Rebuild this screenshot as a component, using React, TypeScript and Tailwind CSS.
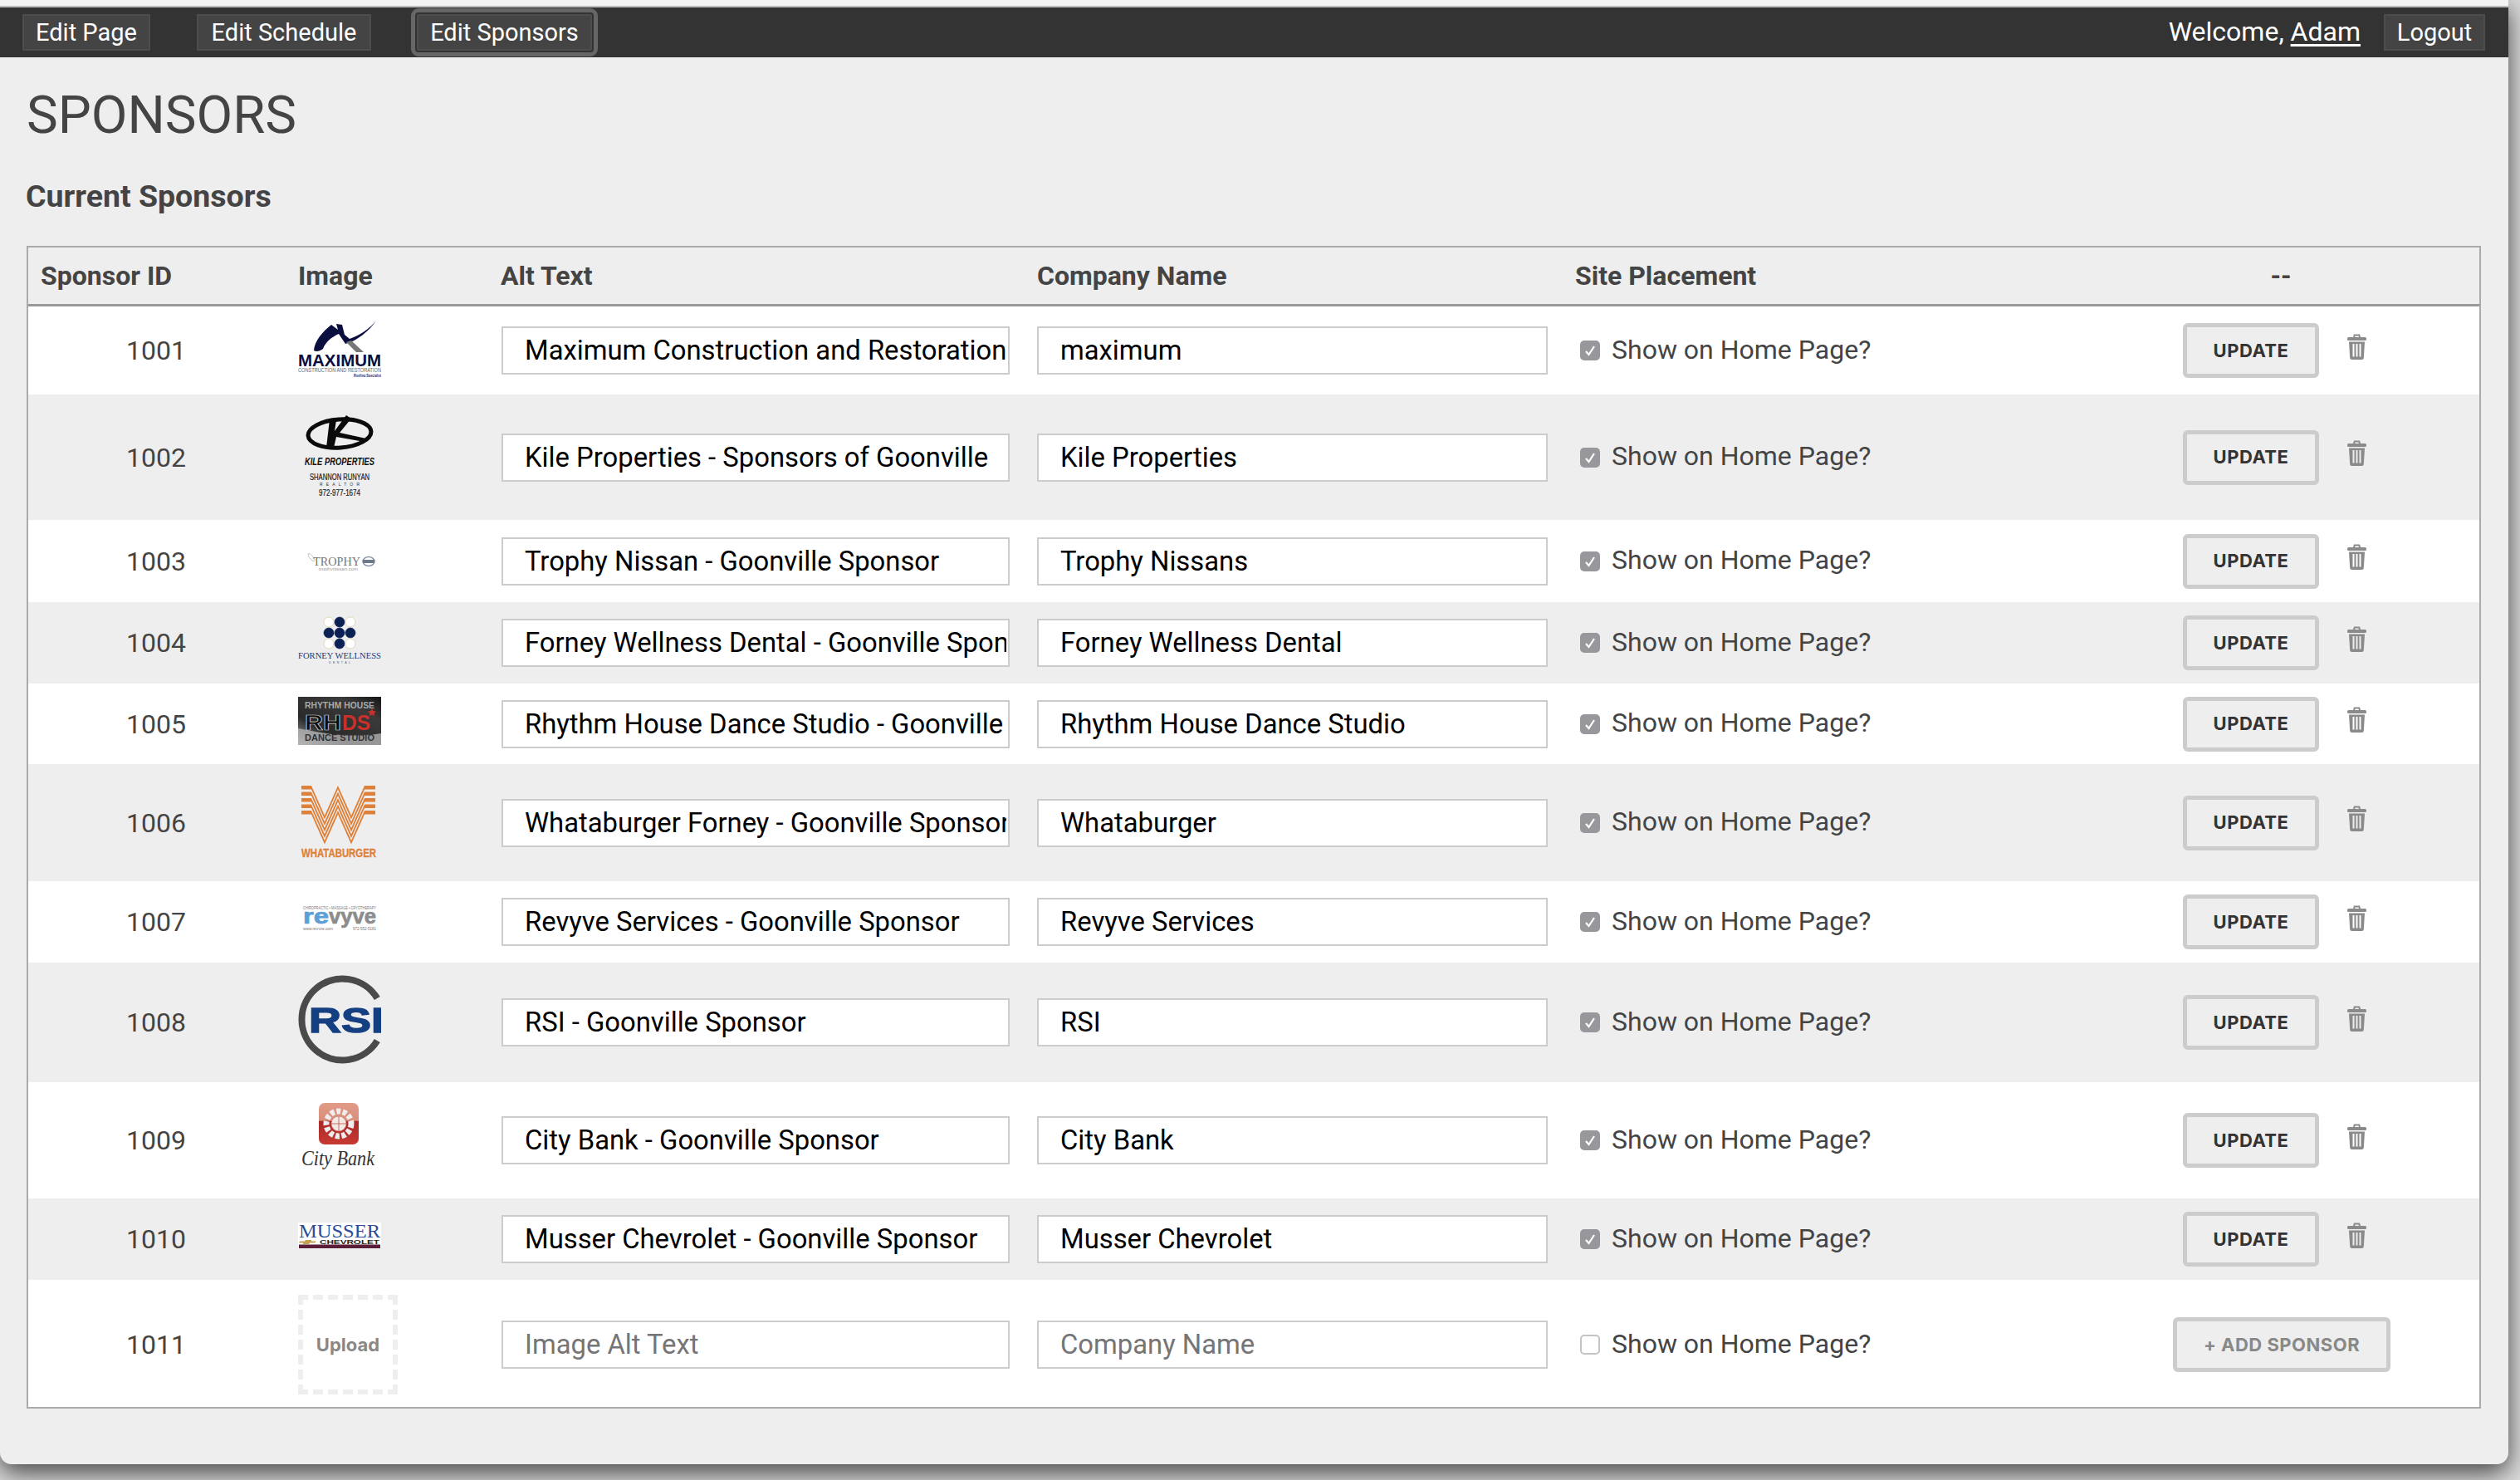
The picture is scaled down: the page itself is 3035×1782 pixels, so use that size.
import React from "react";

const serif = "'Liberation Serif', serif";
const sans = "'Liberation Sans', sans-serif";

function MaximumLogo() {
  return (
    <svg width="100" height="68" viewBox="0 0 100 68">
      <path d="M19 36 C20 24 30 13 40 5 L48 11 L46 4 L53 5 L56 17 L62 22 C76 17 87 9 94 0 C86 12 72 24 57 28 L49 16 C40 20 33 26 30 34 C26 37 22 38 19 36Z" fill="#0a0f3f" />
      <path d="M58 26 L64 24 L79 38 L70 38Z" fill="#777" />
      <text x="0" y="55" fontFamily={sans} fontWeight="700" fontSize="21" fill="#0a0f3f" textLength="100" lengthAdjust="spacingAndGlyphs">MAXIMUM</text>
      <text x="0" y="62" fontFamily={sans} fontSize="6.5" fill="#666" textLength="100" lengthAdjust="spacingAndGlyphs">CONSTRUCTION AND RESTORATION</text>
      <text x="67" y="67.5" fontFamily={sans} fontWeight="700" fontSize="5" fill="#1b2a78" textLength="33" lengthAdjust="spacingAndGlyphs">Roofing Specialist</text>
    </svg>
  );
}

function KileLogo() {
  return (
    <svg width="100" height="100" viewBox="0 0 100 100">
      <ellipse cx="50" cy="23" rx="38" ry="17" fill="none" stroke="#0a0a0a" strokeWidth="5" transform="rotate(-4 50 23)" />
      <path d="M34 40 L38 6 L46 7 L44 20 L58 1 L64 5 L50 22 L82 29 L80 33 L46 27 L43 40Z" fill="#0a0a0a" />
      <text x="8" y="61" fontFamily={sans} fontStyle="italic" fontWeight="700" fontSize="12" fill="#111" textLength="84" lengthAdjust="spacingAndGlyphs">KILE PROPERTIES</text>
      <text x="14" y="79" fontFamily={sans} fontSize="10.500" fill="#222" stroke="#222" strokeWidth="0.2" textLength="72" lengthAdjust="spacingAndGlyphs">SHANNON RUNYAN</text>
      <text x="26" y="86" fontFamily={sans} fontSize="5" fill="#333" textLength="48">REALTOR</text>
      <text x="25" y="98" fontFamily={sans} fontSize="10.500" fill="#222" stroke="#222" strokeWidth="0.2" textLength="50" lengthAdjust="spacingAndGlyphs">972-977-1674</text>
    </svg>
  );
}

function TrophyLogo() {
  return (
    <svg width="100" height="23" viewBox="0 0 100 23">
      <path d="M12 3 C14 1 16 4 19 8 C21 10 20 13 17 11 C15 9 12 7 12 3Z" fill="none" stroke="#999" strokeWidth="0.6" />
      <text x="18" y="17" fontFamily={serif} fontSize="15" fill="#777" textLength="57" lengthAdjust="spacingAndGlyphs">TROPHY</text>
      <text x="25" y="22.5" fontFamily={sans} fontSize="4.5" fill="#999" textLength="47" lengthAdjust="spacingAndGlyphs">trophynissan.com</text>
      <ellipse cx="85" cy="12" rx="7" ry="5.5" fill="none" stroke="#8b95a5" strokeWidth="1.5" />
      <rect x="78" y="10" width="14" height="4" fill="#6d7888" />
    </svg>
  );
}

function ForneyLogo() {
  const navy = "#0b2053";
  return (
    <svg width="100" height="58" viewBox="0 0 100 58">
      {[7, 20, 33].map((cy, row) =>
        [37, 50, 63].map((cx, col) => {
          const corner = (row === 0 || row === 2) && col !== 1;
          return <circle key={`${row}-${col}`} cx={cx} cy={cy} r="6" fill={corner ? "#fff" : navy} stroke={corner ? "#dcc9a0" : navy} strokeWidth="0.7" />;
        })
      )}
      <text x="0" y="51" fontFamily={serif} fontSize="10" fill="#2a3a70" textLength="100" lengthAdjust="spacingAndGlyphs">FORNEY WELLNESS</text>
      <text x="37" y="56.5" fontFamily={sans} fontSize="3.6" fill="#556" textLength="26">DENTAL</text>
    </svg>
  );
}

function RhythmLogo() {
  return (
    <svg width="100" height="58" viewBox="0 0 100 58">
      <defs>
        <linearGradient id="rhds" x1="0" y1="1" x2="1" y2="0">
          <stop offset="0" stopColor="#a8a8a8" />
          <stop offset="0.3" stopColor="#2a2a2a" />
          <stop offset="0.75" stopColor="#3a3a3a" />
          <stop offset="1" stopColor="#151515" />
        </linearGradient>
      </defs>
      <rect width="100" height="58" fill="url(#rhds)" />
      <path d="M0 38 C30 44 60 50 100 44 L100 58 L0 58Z" fill="#b9b9b9" opacity="0.75" />
      <text x="8" y="14" fontFamily={sans} fontWeight="700" fontSize="10" fill="#a9a9a9" textLength="84" lengthAdjust="spacingAndGlyphs">RHYTHM HOUSE</text>
      <text x="8" y="40" fontFamily={sans} fontWeight="700" fontSize="26" fill="#0c0c0c" stroke="#ddd" strokeWidth="0.7" textLength="44" lengthAdjust="spacingAndGlyphs">RH</text>
      <text x="53" y="40" fontFamily={sans} fontWeight="700" fontSize="26" fill="#c9302c" textLength="34" lengthAdjust="spacingAndGlyphs">DS</text>
      <path d="M89 14 L90.500 17 L94 17.500 L91.500 20 L92 23 L89 21.500 L86 23 L86.500 20 L84 17.500 L87.500 17Z" fill="#c9302c" />
      <text x="8" y="53" fontFamily={sans} fontWeight="700" fontSize="11" fill="#333" textLength="84" lengthAdjust="spacingAndGlyphs">DANCE STUDIO</text>
    </svg>
  );
}

function WhataburgerLogo() {
  const stripe = (t: number) => {
    const b = t + 4.5;
    return `4,${t} 16,${t} 32,${t + 36} 48,${t} 64,${t + 36} 80,${t} 93,${t} 93,${b} 80,${b} 64,${b + 36} 48,${b} 32,${b + 36} 16,${b} 4,${b}`;
  };
  return (
    <svg width="100" height="89" viewBox="0 0 100 89">
      {[2, 9.5, 17, 24.5, 32].map((t) => (
        <polygon key={t} points={stripe(t)} fill="#df8039" />
      ))}
      <text x="4" y="88" fontFamily={sans} fontWeight="700" fontSize="15" fill="#df8039" stroke="#df8039" strokeWidth="0.3" textLength="90" lengthAdjust="spacingAndGlyphs">WHATABURGER</text>
    </svg>
  );
}

function RevyveLogo() {
  return (
    <svg width="100" height="31" viewBox="0 0 100 31">
      <text x="6" y="6" fontFamily={sans} fontSize="5" fill="#777" textLength="88" lengthAdjust="spacingAndGlyphs">CHIROPRACTIC • MASSAGE • CRYOTHERAPY</text>
      <text x="6" y="22.500" fontFamily={sans} fontWeight="700" fontSize="26" fill="#5b9fd6" stroke="#5b9fd6" strokeWidth="0.7" textLength="31" lengthAdjust="spacingAndGlyphs">re</text>
      <text x="37" y="22.500" fontFamily={sans} fontWeight="700" fontSize="26" fill="#8c8c8c" stroke="#8c8c8c" strokeWidth="0.7" textLength="57" lengthAdjust="spacingAndGlyphs">vyve</text>
      <text x="6" y="30.500" fontFamily={sans} fontSize="4.5" fill="#777" textLength="36" lengthAdjust="spacingAndGlyphs">www.revyve.com</text>
      <text x="66" y="30.500" fontFamily={sans} fontSize="4.5" fill="#777" textLength="28" lengthAdjust="spacingAndGlyphs">972-552-5181</text>
    </svg>
  );
}

function RsiLogo() {
  return (
    <svg width="100" height="107" viewBox="0 0 100 107">
      <path d="M95.300 28 A49 49 0 1 0 95.300 79" fill="none" stroke="#4a4a4a" strokeWidth="8" />
      <text x="13" y="69" fontFamily={sans} fontWeight="700" fontSize="43" fill="#143f80" stroke="#143f80" strokeWidth="1.4" textLength="90" lengthAdjust="spacingAndGlyphs">RSI</text>
    </svg>
  );
}

function CityBankLogo() {
  return (
    <svg width="100" height="83" viewBox="0 0 100 83">
      <defs>
        <linearGradient id="citybank" x1="0" y1="0" x2="0" y2="1">
          <stop offset="0" stopColor="#e09b87" />
          <stop offset="0.42" stopColor="#d98e7c" />
          <stop offset="0.45" stopColor="#a82a26" />
          <stop offset="1" stopColor="#c83a34" />
        </linearGradient>
      </defs>
      <rect x="25" y="0" width="48" height="50" rx="7" fill="url(#citybank)" />
      <circle cx="49" cy="25" r="15" fill="none" stroke="#eee" strokeWidth="7" strokeDasharray="5 2.500" />
      <circle cx="49" cy="25" r="9" fill="#f4e9e4" stroke="#c9817a" strokeWidth="0.6" />
      <path d="M49 16 V34 M40 25 H58" stroke="#b2413a" strokeWidth="0.7" />
      <text x="4" y="75" fontFamily={serif} fontStyle="italic" fontSize="26" fill="#333" textLength="88" lengthAdjust="spacingAndGlyphs">City Bank</text>
    </svg>
  );
}

function MusserLogo() {
  return (
    <svg width="100" height="31" viewBox="0 0 100 31">
      <rect width="100" height="31" fill="#fff" />
      <text x="1" y="17.500" fontFamily={serif} fontSize="23" fill="#2a4b9b" textLength="98" lengthAdjust="spacingAndGlyphs">MUSSER</text>
      <path d="M2 22.500 H8 L9 21 H16 V22.500 H22 L20 24.500 H14 L13 26 H6 V24.500 H1Z" fill="#c4a052" />
      <text x="26" y="26" fontFamily={sans} fontWeight="700" fontSize="8" fill="#222" textLength="72" lengthAdjust="spacingAndGlyphs">CHEVROLET</text>
      <rect x="1" y="26.500" width="98" height="4.500" fill="#5a1e38" />
    </svg>
  );
}

const sponsors = [
  { id: 1001, alt: "Maximum Construction and Restoration", name: "maximum", row: "h-[106px] bg-white", logo: <MaximumLogo />, shift: "mb-[5px]" },
  { id: 1002, alt: "Kile Properties - Sponsors of Goonville", name: "Kile Properties", row: "h-[151px] bg-[#eeeeee]", logo: <KileLogo />, shift: "mb-[4px]" },
  { id: 1003, alt: "Trophy Nissan - Goonville Sponsor", name: "Trophy Nissans", row: "h-[99px] bg-white", logo: <TrophyLogo />, shift: "mb-0" },
  { id: 1004, alt: "Forney Wellness Dental - Goonville Sponsor", name: "Forney Wellness Dental", row: "h-[98px] bg-[#eeeeee]", logo: <ForneyLogo />, shift: "mb-[6px]" },
  { id: 1005, alt: "Rhythm House Dance Studio - Goonville Sponsor", name: "Rhythm House Dance Studio", row: "h-[97px] bg-white", logo: <RhythmLogo />, shift: "mb-[7px]" },
  { id: 1006, alt: "Whataburger Forney - Goonville Sponsor", name: "Whataburger", row: "h-[141px] bg-[#eeeeee]", logo: <WhataburgerLogo />, shift: "mb-[5px]" },
  { id: 1007, alt: "Revyve Services - Goonville Sponsor", name: "Revyve Services", row: "h-[98px] bg-white", logo: <RevyveLogo />, shift: "mb-[11px]" },
  { id: 1008, alt: "RSI - Goonville Sponsor", name: "RSI", row: "h-[144px] bg-[#eeeeee]", logo: <RsiLogo />, shift: "mb-[7px]" },
  { id: 1009, alt: "City Bank - Goonville Sponsor", name: "City Bank", row: "h-[140px] bg-white", logo: <CityBankLogo />, shift: "mb-[7px]" },
  { id: 1010, alt: "Musser Chevrolet - Goonville Sponsor", name: "Musser Chevrolet", row: "h-[98px] bg-[#eeeeee]", logo: <MusserLogo />, shift: "mb-[10px]" },
];

const inputClass =
  "h-[58px] border-2 border-[#cccccc] bg-white pl-[26px] pr-[2px] text-[32.8px] text-black outline-none placeholder:text-[#757575]";

function NavButton({ label, width, focused }: { label: string; width: string; focused?: boolean }) {
  return (
    <button
      className={
        "h-[44px] border-2 border-[#4d4d4d] bg-[#444444] text-[29px] leading-none text-white " +
        width +
        (focused ? " rounded-[2px] outline-[5px] outline-offset-[2px] outline-[#666666]" : "")
      }
    >
      {label}
    </button>
  );
}

function TrashIcon() {
  return (
    <svg width="23" height="31" viewBox="0 0 23 31" className="mb-[10px] ml-[34px]" fill="#8a8a8a">
      <path d="M7 4 L8 0.500 H15 L16 4 H14 L13.500 2.500 H9.500 L9 4Z" />
      <rect x="0" y="4" width="23" height="4" rx="1.500" />
      <path fillRule="evenodd" d="M2 9.500 H21 L19.800 29 Q19.700 31 17.500 31 H5.500 Q3.300 31 3.200 29Z M6.500 12 V27.500 H8.500 V12Z M10.500 12 V27.500 H12.500 V12Z M14.500 12 V27.500 H16.500 V12Z" />
    </svg>
  );
}

function Checkbox({ checked }: { checked: boolean }) {
  return (
    <span
      className={
        "mr-[14px] flex h-[24px] w-[24px] items-center justify-center rounded-[5px] border-2 " +
        (checked ? "border-[#97979c] bg-[#97979c]" : "border-[#c4c4c4] bg-white")
      }
    >
      {checked && (
        <svg width="16" height="16" viewBox="0 0 16 16" fill="none" stroke="#ffffff" strokeWidth="2.200">
          <path d="M3 9 L6.500 13 L13 3" />
        </svg>
      )}
    </span>
  );
}

function Row({ rowClass, id, image, alt, name, checked, action }: {
  rowClass: string;
  id: number;
  image: React.ReactNode;
  alt: string;
  name: string;
  checked: boolean;
  action: React.ReactNode;
}) {
  return (
    <div className={"flex items-center " + rowClass}>
      <div className="w-[308px] text-center text-[32px] text-[#444444]">{id}</div>
      <div className="flex w-[262px] items-center pl-[17px]">{image}</div>
      <div className="w-[645px]">
        <input className={inputClass + " w-[612px]"} defaultValue={alt} placeholder="Image Alt Text" />
      </div>
      <div className="w-[648px]">
        <input className={inputClass + " w-[615px]"} defaultValue={name} placeholder="Company Name" />
      </div>
      <div className="flex w-[732px] items-center pl-[6px] text-[32px] text-[#444444]">
        <Checkbox checked={checked} />
        <span className="mb-[3px]">Show on Home Page?</span>
      </div>
      <div className="flex items-center">{action}</div>
    </div>
  );
}

export default function App() {
  return (
    <div className="h-[1782px] w-[3035px] overflow-hidden bg-[#dcdcdc] font-[Roboto,sans-serif]">
      <div className="h-[1763px] w-[3021px] rounded-b-[14px] bg-[#eeeeee] shadow-[0_10px_30px_rgba(0,0,0,0.7)]">
        <div className="h-[9px] border-b-2 border-[#bdbdbd] bg-[#f3f3f3]" />

        <nav className="flex h-[60px] items-center bg-[#333333] pl-[27px] pr-[28px] text-white">
          <NavButton label="Edit Page" width="w-[154px]" />
          <div className="ml-[56px]"><NavButton label="Edit Schedule" width="w-[210px]" /></div>
          <div className="ml-[55px]"><NavButton label="Edit Sponsors" width="w-[211px]" focused /></div>
          <div className="mb-[2px] ml-auto text-[32px]">
            Welcome, <a className="underline underline-offset-[4px]">Adam</a>
          </div>
          <div className="ml-[28px]"><NavButton label="Logout" width="w-[122px]" /></div>
        </nav>

        <main className="pl-[32px] pr-[33px] text-[#444444]">
          <h1 className="mt-[35px] h-[70px] text-[63.5px] font-normal leading-[70px]">SPONSORS</h1>
          <h2 className="-ml-[1px] mt-[42px] h-[40px] text-[37.5px] font-bold leading-[40px]">Current Sponsors</h2>

          <div className="mt-[40px] border-2 border-[#aaaaaa]">
            <div className="flex h-[71px] items-center border-b-[3px] border-[#999999] text-[32px] font-bold">
              <div className="w-[308px] pl-[15px]">Sponsor ID</div>
              <div className="w-[262px] pl-[17px]">Image</div>
              <div className="-ml-[1px] w-[646px]">Alt Text</div>
              <div className="w-[648px]">Company Name</div>
              <div className="w-[733px]">Site Placement</div>
              <div className="w-[234px] text-center">--</div>
            </div>

            {sponsors.map((s) => (
              <Row
                key={s.id}
                rowClass={s.row}
                id={s.id}
                image={<div className={"flex " + s.shift}>{s.logo}</div>}
                alt={s.alt}
                name={s.name}
                checked
                action={
                  <>
                    <button className="h-[66px] w-[164px] rounded-[6px] border-[5px] border-[#cccccc] bg-[#eeeeee] font-[Inter,sans-serif] text-[22px] font-bold tracking-[0.5px] text-[#333333]">
                      UPDATE
                    </button>
                    <TrashIcon />
                  </>
                }
              />
            ))}

            <Row
              rowClass="h-[153px] bg-white pt-[3px]"
              id={1011}
              image={
                <div className="flex h-[120px] w-[120px] items-center justify-center border-[6px] border-dashed border-[#eeeeee] font-[Inter,sans-serif] text-[22px] font-bold text-[#888888]">
                  Upload
                </div>
              }
              alt=""
              name=""
              checked={false}
              action={
                <button className="-ml-[12px] h-[66px] w-[262px] rounded-[6px] border-[5px] border-[#cccccc] bg-[#eeeeee] font-[Inter,sans-serif] text-[22px] font-bold tracking-[0.5px] text-[#888888]">
                  + ADD SPONSOR
                </button>
              }
            />
          </div>
        </main>
      </div>
    </div>
  );
}
